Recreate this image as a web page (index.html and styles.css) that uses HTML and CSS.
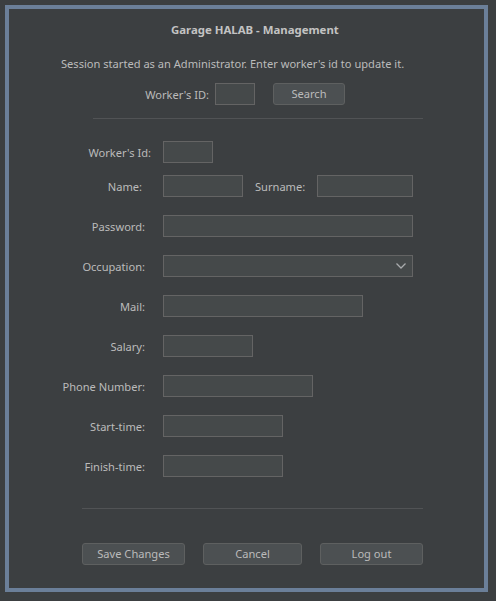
FILE: index.html
```html
<!DOCTYPE html>
<html>
<head>
<meta charset="utf-8">
<link rel="stylesheet" href="styles.css">
</head>
<body>
<div class="frame">
  <div class="title">Garage HALAB - Management</div>
  <div class="info">Session started as an Administrator. Enter worker's id to update it.</div>
  <div class="search-row">
    <span class="search-label">Worker's ID:</span>
    <div class="field w40"></div>
    <button class="btn search-btn">Search</button>
  </div>
  <div class="sep sep-top"></div>

  <div class="row first">
    <span class="lbl lbl-id">Worker's Id:</span>
    <div class="field w50"></div>
  </div>
  <div class="row r-name">
    <span class="lbl lbl-name">Name:</span>
    <div class="field w80"></div>
    <span class="lbl-surname">Surname:</span>
    <div class="field w96"></div>
  </div>
  <div class="row">
    <span class="lbl">Password:</span>
    <div class="field w250"></div>
  </div>
  <div class="row">
    <span class="lbl">Occupation:</span>
    <div class="field combo w250">
      <svg class="chev" width="12" height="8" viewBox="0 0 12 8"><path d="M1.5 1.5 L6 6 L10.5 1.5" fill="none" stroke="#a9abad" stroke-width="1.3"/></svg>
    </div>
  </div>
  <div class="row">
    <span class="lbl">Mail:</span>
    <div class="field w200"></div>
  </div>
  <div class="row">
    <span class="lbl">Salary:</span>
    <div class="field w90"></div>
  </div>
  <div class="row">
    <span class="lbl">Phone Number:</span>
    <div class="field w150"></div>
  </div>
  <div class="row">
    <span class="lbl">Start-time:</span>
    <div class="field w120"></div>
  </div>
  <div class="row">
    <span class="lbl">Finish-time:</span>
    <div class="field w120"></div>
  </div>

  <div class="sep sep-bottom"></div>
  <div class="buttons">
    <button class="btn b-save">Save Changes</button>
    <button class="btn b-cancel">Cancel</button>
    <button class="btn b-logout">Log out</button>
  </div>
</div>
</body>
</html>
```
FILE: styles.css
```css
html, body {
  margin: 0;
  padding: 0;
  background: #3c3f41;
  width: 496px;
  height: 601px;
  overflow: hidden;
}
body {
  font-family: "Noto Sans", "DejaVu Sans", sans-serif;
  font-size: 11.1px;
  color: #bbbbbb;
}
.frame {
  box-sizing: border-box;
  margin: 5px 0 0 5px;
  width: 483px;
  height: 587px;
  border: 4px solid #6b7f99;
  background: #3c3f41;
  display: flex;
  flex-direction: column;
}
.title {
  margin-top: 13px;
  padding-left: 162px;
  line-height: 16px;
  font-size: 11.4px;
  font-weight: bold;
  color: #c3c3c3;
}
.info {
  margin-top: 18px;
  padding-left: 52px;
  line-height: 16px;
}
.search-row {
  margin-top: 11px;
  height: 22px;
  display: flex;
  align-items: center;
}
.search-label {
  box-sizing: border-box;
  width: 206px;
  padding-right: 6px;
  text-align: right;
  flex: none;
}
.field {
  box-sizing: border-box;
  height: 22px;
  background: #45494a;
  border: 1px solid #646464;
  flex: none;
}
.w40 { width: 40px; }
.w50 { width: 50px; }
.w80 { width: 80px; }
.w90 { width: 90px; }
.w96 { width: 96px; }
.w120 { width: 120px; }
.w150 { width: 150px; }
.w200 { width: 200px; }
.w250 { width: 250px; }
.btn {
  box-sizing: border-box;
  height: 22px;
  background: #4c5052;
  border: 1px solid #5e6060;
  border-radius: 3px;
  color: #bbbbbb;
  font-family: inherit;
  font-size: 11.1px;
  padding: 0 0 1px;
  line-height: 18px;
}
.search-btn {
  width: 72px;
  margin-left: 18px;
}
.sep {
  height: 1px;
  background: #515355;
}
.sep-top {
  margin-top: 13px;
  margin-left: 84px;
  width: 330px;
}
.row {
  margin-top: 18px;
  height: 22px;
  display: flex;
  align-items: center;
}
.row.first { margin-top: 22px; }
.row.r-name { margin-top: 12px; }
.lbl {
  box-sizing: border-box;
  width: 154px;
  padding-right: 18px;
  text-align: right;
  flex: none;
}
.lbl-id { padding-right: 12px; }
.lbl-name { padding-right: 21px; }
.lbl-surname {
  width: 74px;
  padding-left: 12px;
  box-sizing: border-box;
  flex: none;
}
.combo {
  display: flex;
  align-items: center;
  justify-content: flex-end;
  padding-right: 5px;
}
.sep-bottom {
  margin-top: 31px;
  margin-left: 73px;
  width: 341px;
}
.buttons {
  margin-top: 34px;
  display: flex;
  padding-left: 73px;
}
.b-save { width: 103px; }
.b-cancel { width: 99px; margin-left: 18px; }
.b-logout { width: 103px; margin-left: 18px; }
```
